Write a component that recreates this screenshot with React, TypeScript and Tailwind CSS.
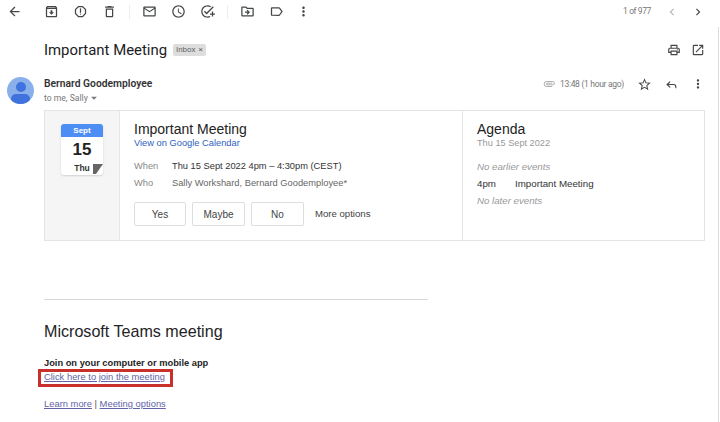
import {
  MdArrowBack, MdOutlineArchive, MdOutlineReport, MdOutlineDelete, MdOutlineEmail, MdOutlineWatchLater,
  MdOutlineAddTask, MdOutlineDriveFileMove, MdOutlineLabel, MdMoreVert, MdChevronLeft, MdChevronRight,
  MdOutlinePrint, MdOpenInNew, MdStarBorder, MdOutlineAttachment, MdArrowDropDown,
} from "react-icons/md";
import { Reply } from "lucide-react";

const T = "text-[#444746]";

function Btn({ label, w }: { label: string; w: string }) {
  return (
    <div className={`${w} h-[24px] flex items-center justify-center rounded-[2px] border border-[#dedede] text-[10px] text-[#444]`}>
      {label}
    </div>
  );
}

export default function App() {
  return (
    <div className="relative w-[720px] h-[422px] overflow-hidden bg-white font-['Roboto',sans-serif]">
      <div className="absolute right-[1px] top-[27px] bottom-0 w-[1px] bg-[#dcdcdc]" />

      <div className={`h-[23px] flex items-center ${T}`}>
        <MdArrowBack size={15} className="ml-[7px] mr-[22px]" />
        <div className="flex items-center gap-[14px]">
          <MdOutlineArchive size={15} />
          <MdOutlineReport size={15} />
          <MdOutlineDelete size={15} />
        </div>
        <div className="w-px h-[14px] bg-[#eeeeee] mx-[19px] ml-[12px]" />
        <div className="flex items-center gap-[14px] -ml-[7px]">
          <MdOutlineEmail size={15} />
          <MdOutlineWatchLater size={15} />
          <MdOutlineAddTask size={15} />
        </div>
        <div className="w-px h-[14px] bg-[#eeeeee] ml-[12px] mr-[12px]" />
        <div className="flex items-center gap-[14px]">
          <MdOutlineDriveFileMove size={15} />
          <MdOutlineLabel size={15} />
          <MdMoreVert size={15} className="-ml-[2px]" />
        </div>
        <div className="ml-auto flex items-center mr-[15px]">
          <span className="text-[8.5px] tracking-[-0.4px] text-[#777] mr-[14px]">1 of 977</span>
          <MdChevronLeft size={14} className="text-[#b5b5b5] mr-[12px]" />
          <MdChevronRight size={14} />
        </div>
      </div>

      <div className="mt-[15px] h-[24px] flex items-center pl-[44px] pr-[15px]">
        <span className="text-[14.9px] text-[#202124]">Important Meeting</span>
        <span className="ml-[6px] h-[12px] px-[3px] flex items-center gap-[3px] rounded-[2px] bg-[#dddddd] text-[8px] text-[#666]">
          Inbox <span className="text-[8px]">×</span>
        </span>
        <div className={`ml-auto flex items-center gap-[10px] ${T}`}>
          <MdOutlinePrint size={14} />
          <MdOpenInNew size={14} />
        </div>
      </div>

      <div className="mt-[15px] flex pl-[7px] pr-[15px]">
        <div className="w-[27px] h-[27px] rounded-full bg-[#8ab0ec] overflow-hidden flex flex-col items-center shrink-0">
          <div className="mt-[5px] w-[10px] h-[10px] rounded-full bg-[#3f72dc]" />
          <div className="mt-[2px] w-[19px] h-[10px] rounded-full bg-[#3f72dc]" />
        </div>
        <div className="ml-[10px]">
          <div className="text-[10.3px] leading-[14px] font-semibold text-[#333]">Bernard Goodemployee</div>
          <div className="text-[8.6px] leading-[12px] text-[#777] flex items-center">
            to me, Sally <MdArrowDropDown size={14} className="-ml-[1px]" />
          </div>
        </div>
        <div className={`ml-auto h-[14px] flex items-center ${T}`}>
          <MdOutlineAttachment size={12} className="text-[#999] mr-[5px]" />
          <span className="text-[8.5px] tracking-[-0.3px] text-[#777] mr-[13px]">13:48 (1 hour ago)</span>
          <MdStarBorder size={15} className="mr-[13px]" />
          <Reply size={13} strokeWidth={2} className="mr-[13px]" />
          <MdMoreVert size={14} />
        </div>
      </div>

      <div className="mt-[5px] ml-[44px] w-[661px] h-[131px] flex border border-[#e4e4e4] font-['Liberation_Sans',sans-serif]">
        <div className="w-[75px] bg-[#f5f5f5] border-r border-[#e6e6e6] flex justify-center shrink-0">
          <div className="mt-[13px] w-[42px] h-[51px] bg-white rounded-[3px] shadow-[0_1px_2px_rgba(0,0,0,0.15)] relative flex flex-col items-center">
            <div className="w-full h-[13px] bg-[#4d8ef5] rounded-t-[3px] text-white text-[8px] font-bold flex items-center justify-center">Sept</div>
            <div className="mt-[3px] text-[17px] leading-[20px] font-bold text-[#222]">15</div>
            <div className="mt-[2px] text-[8.5px] leading-[12px] font-bold text-[#333]">Thu</div>
            <svg viewBox="0 0 10 10" className="absolute right-0 bottom-[1px] w-[10px] h-[10px]">
              <path d="M0 0H10L3 10H0Z" fill="#666" />
            </svg>
          </div>
        </div>
        <div className="w-[343px] border-r border-[#e6e6e6] pl-[14px] shrink-0">
          <div className="mt-[10px] text-[14px] leading-[17px] text-[#222]">Important Meeting</div>
          <div className="text-[9.3px] leading-[11px] text-[#2f5fc0]">View on Google Calendar</div>
          <div className="mt-[10px] flex text-[9.3px] leading-[14px]">
            <span className="w-[38px] text-[#888]">When</span>
            <span className="text-[#333]">Thu 15 Sept 2022 4pm – 4:30pm (CEST)</span>
          </div>
          <div className="mt-[3px] flex text-[9.3px] leading-[14px]">
            <span className="w-[38px] text-[#888]">Who</span>
            <span className="text-[#666]">Sally Workshard, Bernard Goodemployee*</span>
          </div>
          <div className="mt-[12px] flex items-center gap-[6px]">
            <Btn label="Yes" w="w-[52px]" />
            <Btn label="Maybe" w="w-[53px]" />
            <Btn label="No" w="w-[53px]" />
            <span className="ml-[5px] text-[9.6px] text-[#444]">More options</span>
          </div>
        </div>
        <div className="pl-[14px]">
          <div className="mt-[10px] text-[14px] leading-[17px] text-[#222]">Agenda</div>
          <div className="text-[9.2px] leading-[11px] text-[#999]">Thu 15 Sept 2022</div>
          <div className="mt-[11px] text-[9.7px] leading-[14px] italic text-[#999]">No earlier events</div>
          <div className="mt-[3px] flex text-[9.75px] leading-[14px] text-[#333]">
            <span className="w-[38px]">4pm</span>
            <span>Important Meeting</span>
          </div>
          <div className="mt-[3px] text-[9.7px] leading-[14px] italic text-[#999]">No later events</div>
        </div>
      </div>

      <div className="mt-[58px] ml-[44px] w-[384px] h-px bg-[#d8d8d8]" />
      <div className="ml-[44px] font-['Liberation_Sans',sans-serif]">
        <div className="mt-[21px] text-[16.1px] leading-[20px] text-[#242424]">Microsoft Teams meeting</div>
        <div className="mt-[16px] text-[9.3px] leading-[13px] font-bold text-[#242424]">Join on your computer or mobile app</div>
        <div className="relative text-[9.4px] leading-[13px] text-[#6264a7] underline">
          Click here to join the meeting
          <div className="absolute -left-[6px] -top-[1px] w-[135px] h-[18px] border-[3px] border-[#c9302c]" />
        </div>
        <div className="mt-[14px] text-[9.4px] leading-[13px] text-[#6264a7]">
          <span className="underline">Learn more</span> <span className="text-[#555]">|</span> <span className="underline">Meeting options</span>
        </div>
      </div>
    </div>
  );
}
